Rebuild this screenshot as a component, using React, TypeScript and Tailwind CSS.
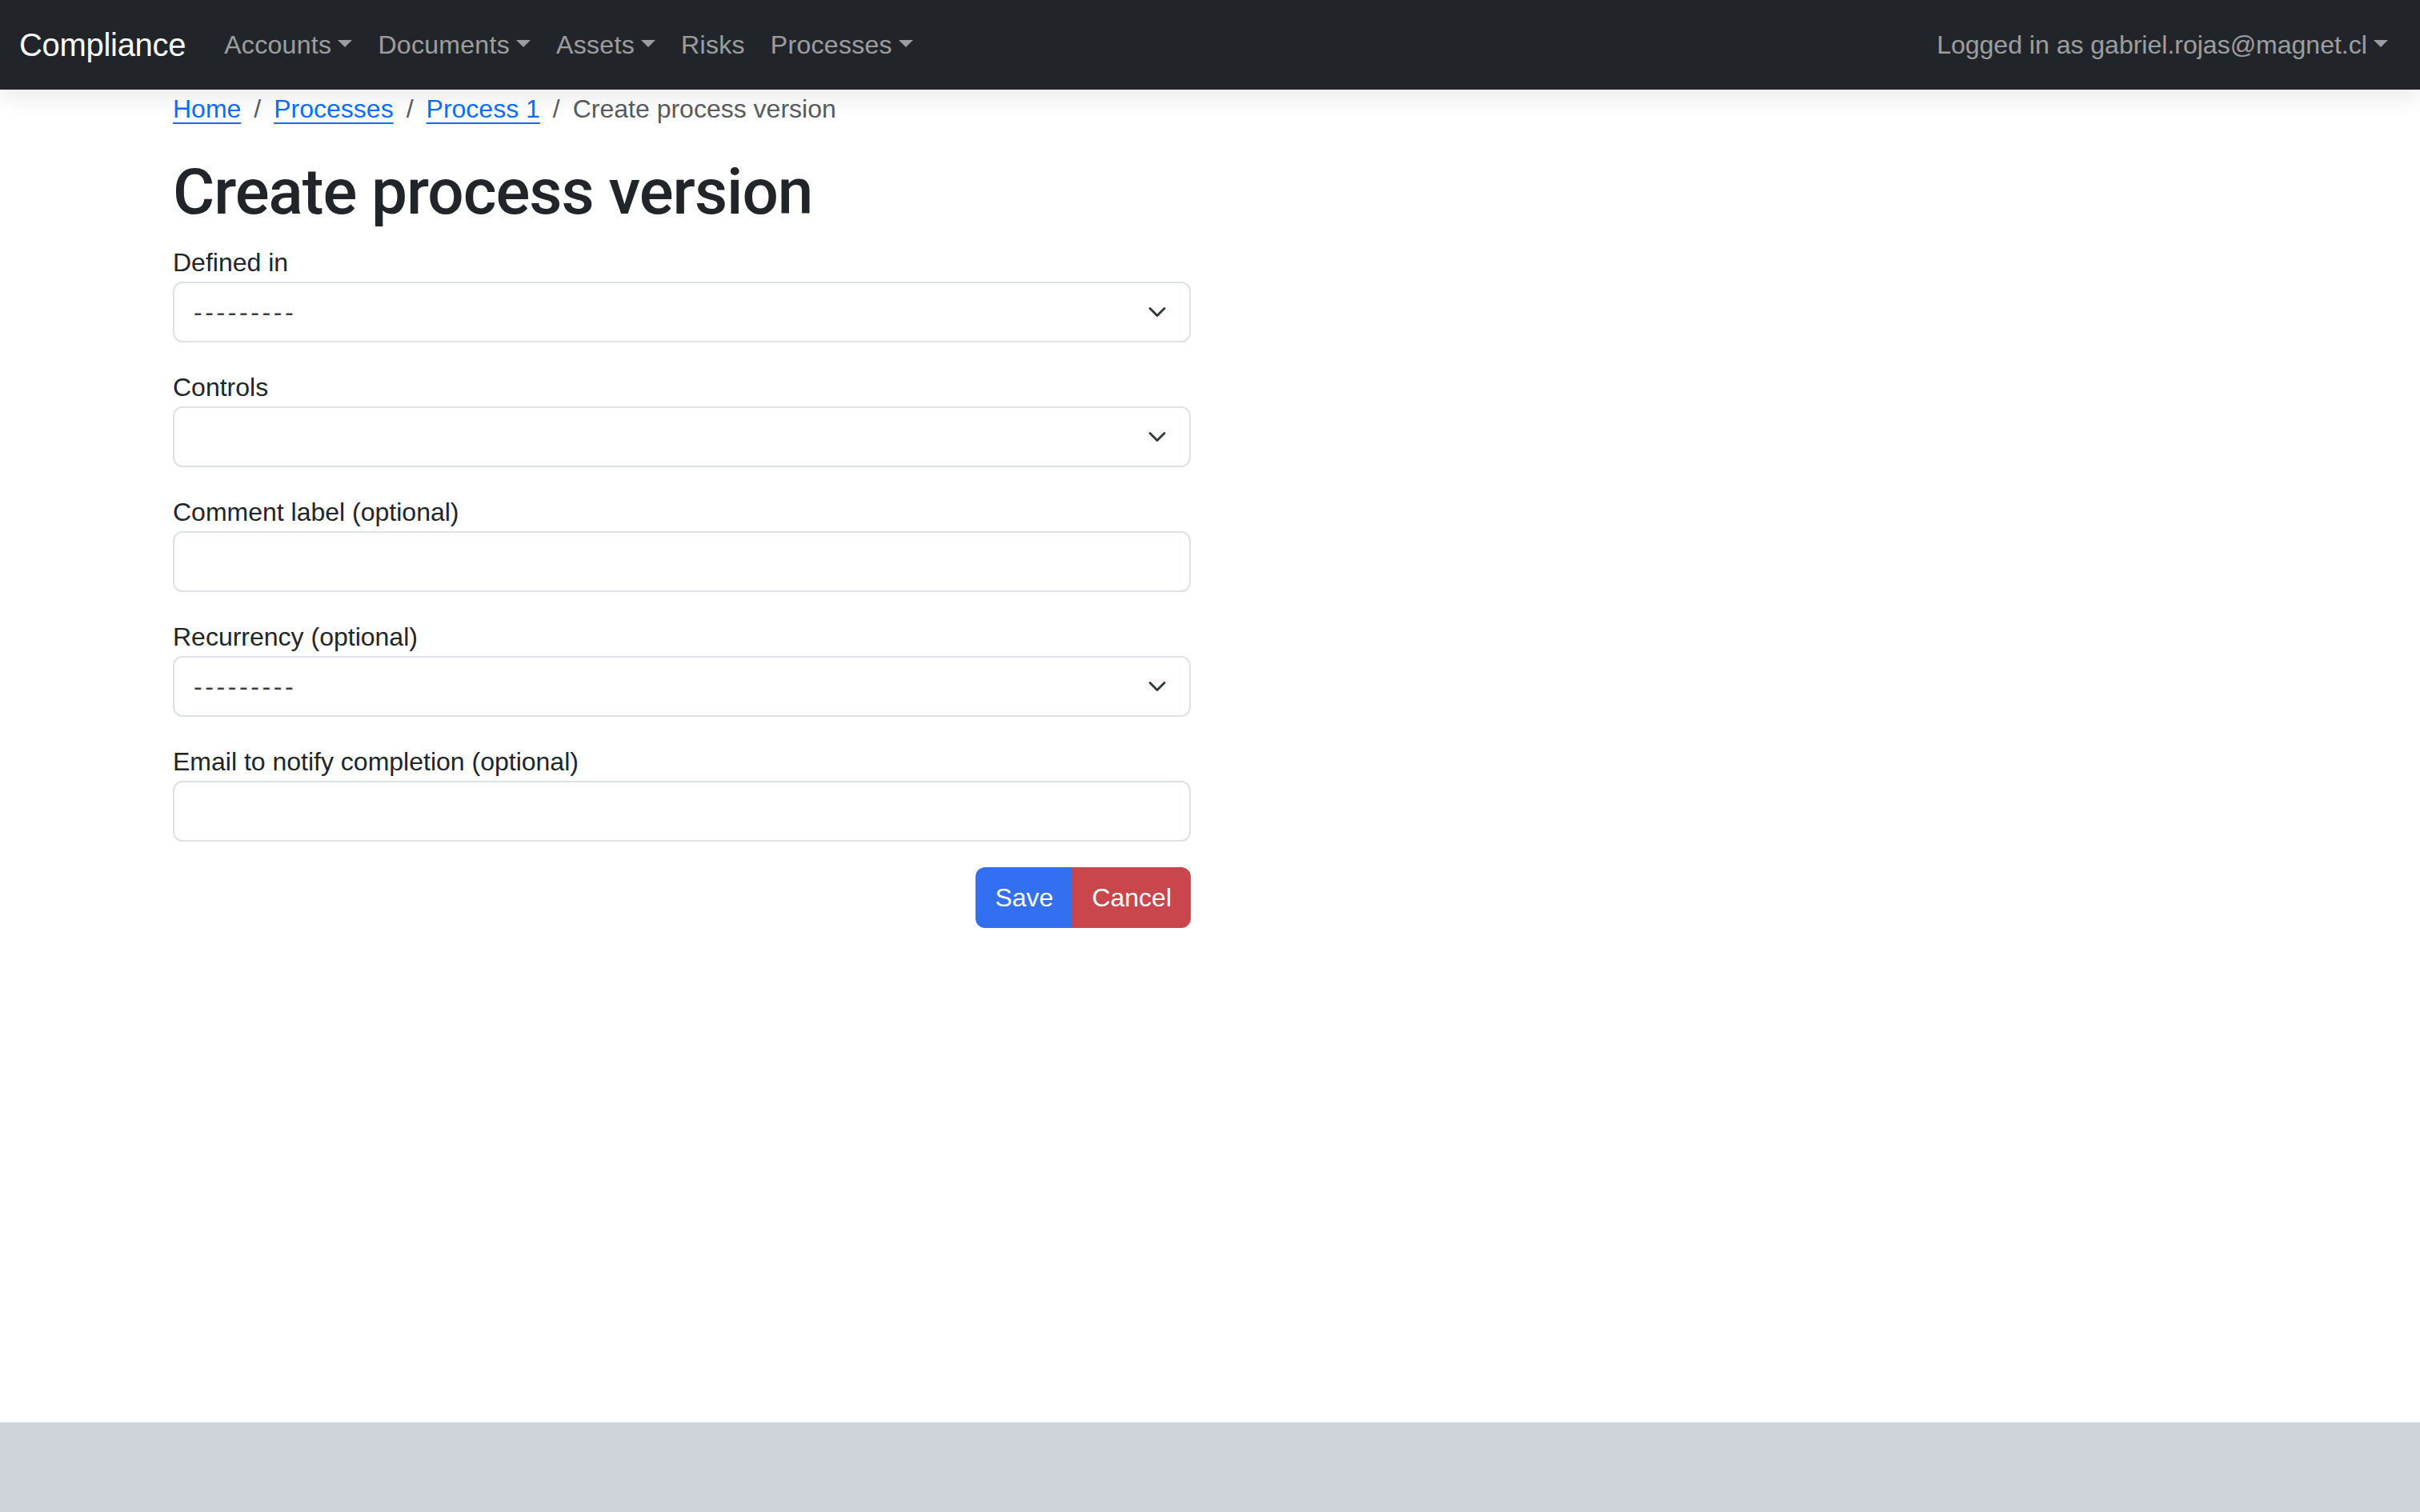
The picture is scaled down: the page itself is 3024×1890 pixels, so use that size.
const NAV_ITEMS: Array<{ label: string; dropdown: boolean }> = [
  { label: "Accounts", dropdown: true },
  { label: "Documents", dropdown: true },
  { label: "Assets", dropdown: true },
  { label: "Risks", dropdown: false },
  { label: "Processes", dropdown: true },
];

const FIELDS: Array<{ label: string; kind: "select" | "input"; value?: string }> = [
  { label: "Defined in", kind: "select", value: "---------" },
  { label: "Controls", kind: "select", value: "" },
  { label: "Comment label (optional)", kind: "input" },
  { label: "Recurrency (optional)", kind: "select", value: "---------" },
  { label: "Email to notify completion (optional)", kind: "input" },
];

function Caret() {
  return (
    <span className="ml-[0.255em] inline-block h-0 w-0 border-x-[0.3em] border-t-[0.3em] border-b-0 border-x-transparent align-[0.255em]" />
  );
}

function Chevron() {
  return (
    <svg width="32" height="24" viewBox="0 0 16 16" className="shrink-0">
      <path
        d="m2 5 6 6 6-6"
        fill="none"
        stroke="#343a40"
        strokeWidth="2"
        strokeLinecap="round"
        strokeLinejoin="round"
      />
    </svg>
  );
}

function Navbar() {
  return (
    <nav className="relative z-10 flex h-[112px] items-center bg-[#212529] px-[24px] shadow-[0_12px_24px_rgba(0,0,0,0.08)]">
      <span className="mr-[32px] text-[40px] leading-[60px] tracking-[-0.3px] text-white">Compliance</span>
      <div className="flex items-center">
        {NAV_ITEMS.map((item) => (
          <span key={item.label} className="px-[16px] text-[32px] leading-[48px] tracking-[0.3px] text-white/55">
            {item.label}
            {item.dropdown && <Caret />}
          </span>
        ))}
      </div>
      <span className="ml-auto px-[16px] text-[32px] leading-[48px] text-white/55">
        Logged in as gabriel.rojas@magnet.cl
        <Caret />
      </span>
    </nav>
  );
}

function Breadcrumb() {
  const links = ["Home", "Processes", "Process 1"];
  return (
    <ol className="mb-[32px] flex text-[32px] leading-[48px]">
      {links.map((l) => (
        <li key={l} className="flex">
          <a href="#" className="text-[#0d6efd] underline decoration-[2px] underline-offset-[6px]">
            {l}
          </a>
          <span className="px-[16px] text-[#595c5f]">/</span>
        </li>
      ))}
      <li className="text-[#595c5f]">Create process version</li>
    </ol>
  );
}

function Field({ label, kind, value }: { label: string; kind: "select" | "input"; value?: string }) {
  return (
    <div className="mb-[32px]">
      <label className="block text-[32px] leading-[48px] text-[#212529]">{label}</label>
      <div className="flex h-[76px] items-center justify-between rounded-[12px] border-2 border-[#dee2e6] bg-white px-[24px] text-[32px] text-[#212529]">
        <span className="tracking-[3.6px] text-[#3a3d40]">{kind === "select" ? value : ""}</span>
        {kind === "select" && <Chevron />}
      </div>
    </div>
  );
}

export default function App() {
  return (
    <div className="flex min-h-screen flex-col bg-white font-['Liberation_Sans',Arial,sans-serif] text-[#212529]">
      <Navbar />
      <main className="flex-1">
        <div className="mx-auto w-[2640px] px-[24px]">
          <Breadcrumb />
          <h1 className="mb-[16px] font-['Roboto',sans-serif] text-[80px] font-medium leading-[96px] tracking-[-1px]">
            Create process version
          </h1>
          <div className="w-[1272px]">
            {FIELDS.map((f) => (
              <Field key={f.label} {...f} />
            ))}
            <div className="flex justify-end">
              <button className="h-[76px] rounded-l-[12px] bg-[#3370f1] px-[24px] text-[32px] text-white">
                Save
              </button>
              <button className="h-[76px] rounded-r-[12px] bg-[#c9464c] px-[24px] text-[32px] text-white">
                Cancel
              </button>
            </div>
          </div>
        </div>
      </main>
      <footer className="h-[112px] bg-[#ced4da]" />
    </div>
  );
}
